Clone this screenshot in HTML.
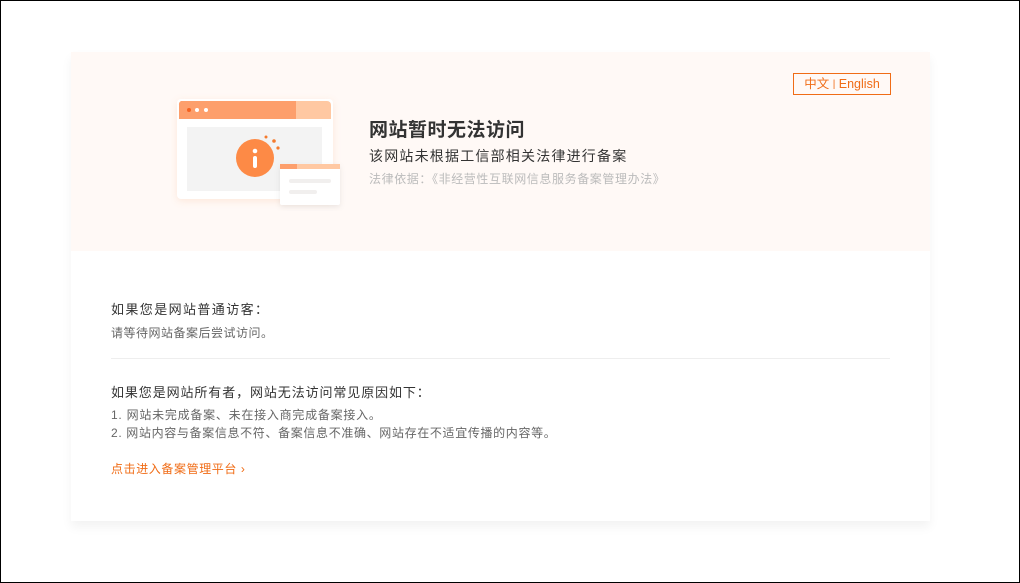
<!DOCTYPE html>
<html><head><meta charset="utf-8"><style>
*{margin:0;padding:0;box-sizing:border-box}
body{width:1020px;height:583px;background:#fff;border:1px solid #000;position:relative;overflow:hidden;font-family:"Liberation Sans","Noto Sans CJK SC",sans-serif}
.card{position:absolute;left:70px;top:51px;width:859px;height:469px;background:#fff;box-shadow:0 6px 10px rgba(0,0,0,0.05)}
.head{position:absolute;left:0;top:0;width:859px;height:199px;background:#fff9f6}
.lang{position:absolute;left:722px;top:21px;width:98px;height:22px;border:1px solid #f06c16;color:#f06c16;font-size:12.5px;line-height:20px;text-align:center}
.t{position:absolute;white-space:nowrap}
</style></head><body>
<div class="card">
<div class="head">
<div class="lang">中文 <span style="font-size:10px;position:relative;top:-1px">|</span> English</div>
<svg style="position:absolute;left:100px;top:39px" width="180" height="120" viewBox="170 90 180 120">
<rect x="176" y="98" width="156" height="100" rx="4" fill="#fff" style="filter:drop-shadow(0 2px 4px rgba(240,108,22,.12))"/>
<path d="M180 100h115v18h-117v-14a4 4 0 0 1 2-4z" fill="#fd9f6c"/>
<path d="M295 100h31a4 4 0 0 1 4 4v14h-35z" fill="#ffc8a2"/>
<circle cx="188" cy="109" r="2" fill="#f56220"/><circle cx="196" cy="109" r="2" fill="#fff"/><circle cx="205" cy="109" r="2" fill="#fff"/>
<rect x="186" y="126" width="135" height="64" fill="#f3f3f3"/>
<circle cx="254" cy="157" r="19" fill="#fd8a46"/>
<circle cx="254" cy="150" r="2.3" fill="#fff"/><rect x="252" y="155" width="4" height="12" rx="2" fill="#fff"/>
<circle cx="265" cy="136" r="1.5" fill="#f57a2c"/><circle cx="273" cy="140" r="1.8" fill="#f57a2c"/><circle cx="277" cy="147" r="1.6" fill="#f57a2c"/>
<rect x="279" y="163" width="60" height="41" rx="2" fill="#fff" style="filter:drop-shadow(0 2px 3px rgba(0,0,0,.08))"/>
<rect x="279" y="163" width="60" height="5" fill="#ffc8a2"/><rect x="279" y="163" width="17" height="5" fill="#fd9f6c"/>
<rect x="288" y="178" width="42" height="4" rx="2" fill="#f1efee"/><rect x="288" y="189" width="28" height="4" rx="2" fill="#f1efee"/>
</svg>
<div class="t" style="left:298px;top:63px;font-size:19px;font-weight:bold;color:#333;letter-spacing:0.5px">网站暂时无法访问</div>
<div class="t" style="left:298px;top:94px;font-size:14px;color:#333;letter-spacing:1.2px">该网站未根据工信部相关法律进行备案</div>
<div class="t" style="left:298px;top:118px;font-size:12px;color:#bbb;letter-spacing:0.6px">法律依据：《非经营性互联网信息服务备案管理办法》</div>
</div>
<div class="t" style="left:40px;top:247px;font-size:13px;color:#333;letter-spacing:1.4px">如果您是网站普通访客：</div>
<div class="t" style="left:40px;top:272px;font-size:12px;color:#666;letter-spacing:0.5px">请等待网站备案后尝试访问。</div>
<div style="position:absolute;left:40px;top:306px;width:779px;height:1px;background:#eee"></div>
<div class="t" style="left:40px;top:330px;font-size:13px;color:#333;letter-spacing:0.9px">如果您是网站所有者，网站无法访问常见原因如下：</div>
<div class="t" style="left:40px;top:354px;font-size:12px;color:#666;letter-spacing:0.75px">1. 网站未完成备案、未在接入商完成备案接入。</div>
<div class="t" style="left:40px;top:372px;font-size:12px;color:#666;letter-spacing:0.65px">2. 网站内容与备案信息不符、备案信息不准确、网站存在不适宜传播的内容等。</div>
<div class="t" style="left:40px;top:408px;font-size:12px;color:#f06c16;letter-spacing:0.6px">点击进入备案管理平台 ›</div>
</div>
</body></html>
